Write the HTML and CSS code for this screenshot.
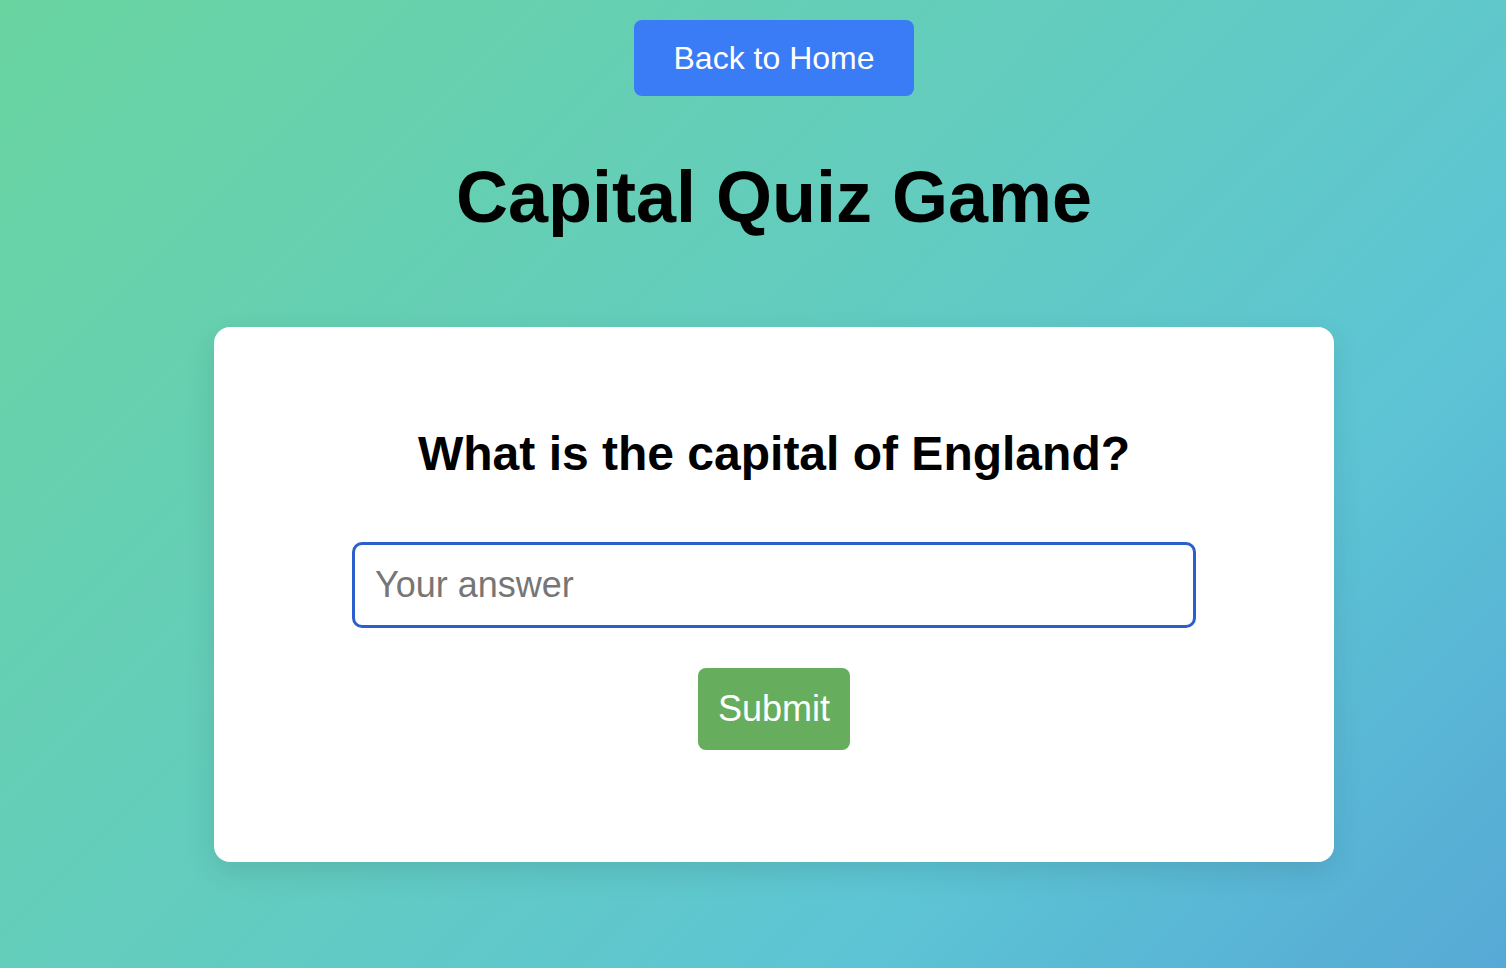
FILE: index.html
```html
<!DOCTYPE html>
<html lang="en">
<head>
<meta charset="utf-8">
<title>Capital Quiz Game</title>
<link rel="stylesheet" href="styles.css">
</head>
<body>
<main class="page">
  <a class="home-btn" href="#">Back to Home</a>
  <h1 class="title">Capital Quiz Game</h1>
  <section class="card">
    <h2 class="question">What is the capital of England?</h2>
    <input class="answer" type="text" placeholder="Your answer">
    <button class="submit" type="button">Submit</button>
  </section>
</main>
</body>
</html>
```

FILE: styles.css
```css
html, body {
  margin: 0;
  padding: 0;
  height: 100%;
}

body {
  font-family: "Liberation Sans", Arial, Helvetica, sans-serif;
  background: linear-gradient(135deg, #69d4a0 0%, #63ccbf 45%, #5dc5d4 72%, #56a9d6 100%);
  background-attachment: fixed;
  min-height: 968px;
}

.page {
  box-sizing: border-box;
  display: flex;
  flex-direction: column;
  align-items: center;
  padding: 20px 0 0 42px;
}

.home-btn {
  display: block;
  background: #3a7bf6;
  color: #fff;
  text-decoration: none;
  font-size: 32px;
  line-height: 36px;
  padding: 20px 40px;
  border-radius: 8px;
}

.title {
  margin: 61px 0 89px;
  font-size: 72px;
  line-height: 81px;
  font-weight: bold;
  color: #000;
}

.card {
  box-sizing: border-box;
  width: 1120px;
  height: 535px;
  background: #fff;
  border-radius: 16px;
  box-shadow: 0 10px 30px rgba(0, 0, 0, 0.1);
  display: flex;
  flex-direction: column;
  align-items: center;
  padding-top: 100px;
}

.question {
  margin: 0 0 61px;
  font-size: 48px;
  line-height: 54px;
  font-weight: bold;
  color: #000;
}

.answer {
  box-sizing: border-box;
  width: 844px;
  height: 86px;
  border: 3px solid #2a5fcc;
  border-radius: 10px;
  padding: 0 20px;
  font-family: inherit;
  font-size: 36px;
  color: #000;
  outline: none;
  margin: 0 0 40px;
}

.answer::placeholder {
  color: #767676;
}

.submit {
  box-sizing: border-box;
  height: 82px;
  padding: 0 20px;
  border: none;
  border-radius: 8px;
  background: #66ad5e;
  color: #fff;
  font-family: inherit;
  font-size: 36px;
  cursor: pointer;
}
```
